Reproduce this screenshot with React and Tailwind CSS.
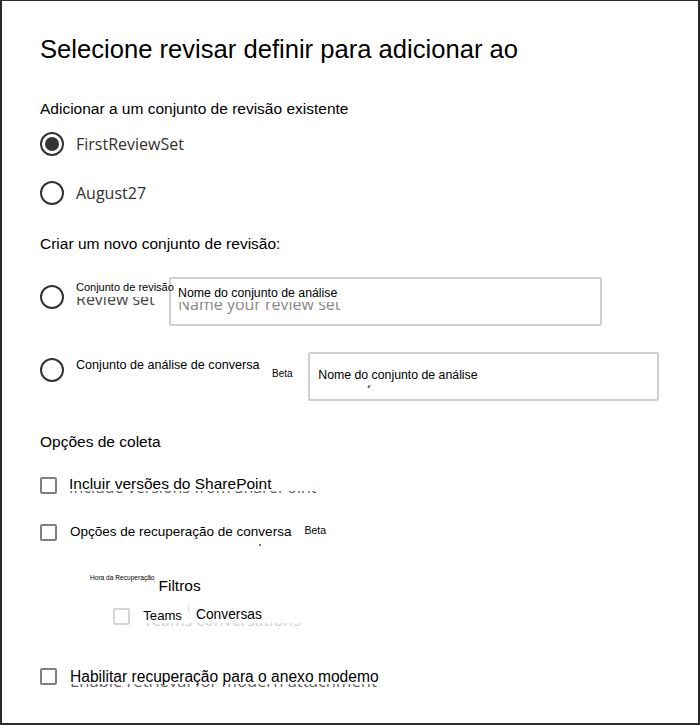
const AR = "font-['Liberation_Sans',Arial,sans-serif]";
const OS = "font-['Open_Sans','Noto_Sans',sans-serif]";

function Radio({ checked }) {
  return (
    <span className="flex h-6 w-6 shrink-0 items-center justify-center rounded-full border-2 border-[#333333] bg-white">
      {checked && <span className="h-[14px] w-[14px] rounded-full bg-[#333333]" />}
    </span>
  );
}

function Box({ light }) {
  return (
    <span
      className={
        light
          ? "block h-[17px] w-[17px] shrink-0 rounded-[2px] border-2 border-[#d4d4d4] bg-white"
          : "block h-[17px] w-[17px] shrink-0 rounded-[2px] border-2 border-[#7f7f7f] bg-white"
      }
    />
  );
}

export default function App() {
  return (
    <div className={`${AR} box-border h-[725px] w-[700px] overflow-hidden border-t border-r-2 border-b-2 border-l-2 border-[#2b2b2b] bg-white pl-[38px] pt-[35.6px] text-black`}>
      {/* Title */}
      <div className="whitespace-nowrap text-[25.6px] leading-none">
        Selecione revisar definir para adicionar ao
      </div>

      {/* Existing */}
      <div className="mt-[39px] whitespace-nowrap text-[15.5px] leading-none">
        Adicionar a um conjunto de revisão existente
      </div>

      <div className="mt-[15.8px] flex h-6 items-center">
        <Radio checked />
        <span className={`${OS} ml-3 text-[16px] leading-none text-[#323130]`}>FirstReviewSet</span>
      </div>

      <div className="mt-[25px] flex h-6 items-center">
        <Radio />
        <span className={`${OS} ml-3 text-[16px] leading-none text-[#323130]`}>August27</span>
      </div>

      {/* New */}
      <div className="mt-[30.7px] whitespace-nowrap text-[15.5px] leading-none">
        Criar um novo conjunto de revisão:
      </div>

      <div className="mt-[25px] flex h-[49px] items-start">
        <div className="mt-[8px]">
          <Radio />
        </div>
        <div className="relative ml-3 mt-[14.8px] w-[80px] shrink-0">
          <span className={`${OS} block whitespace-nowrap text-[16px] leading-none text-[#484644]`}>Review set</span>
          <div className="absolute left-0 right-0 top-[-9.5px] z-10 h-[14.7px] bg-white pt-[0.4px] whitespace-nowrap text-[11px] leading-none">
            Conjunto de revisão
          </div>
        </div>
        <div className="relative ml-[13px] h-[49px] w-[433px] shrink-0 rounded-[2px] border-2 border-[#cfcfcf] pl-[7px] pt-[14px]">
          <div className="relative inline-block">
            <span className={`${OS} block whitespace-nowrap text-[16px] leading-none text-[#8a8886]`}>Name your review set</span>
            <div className="absolute left-0 right-0 top-[-9.8px] h-[16px] bg-white pt-[1.6px] whitespace-nowrap text-[12.3px] leading-none">
              Nome do conjunto de análise
            </div>
          </div>
        </div>
      </div>

      <div className="mt-[26px] flex h-[49.3px] items-start">
        <div className="mt-[6.3px]">
          <Radio />
        </div>
        <span className="ml-3 mt-[7.6px] w-[184px] shrink-0 whitespace-nowrap text-[12.6px] leading-none">
          Conjunto de análise de conversa
        </span>
        <span className="ml-[12px] mt-[17.5px] w-[21px] shrink-0 text-[10px] leading-none">Beta</span>
        <div className="relative ml-[15.3px] h-[49.3px] w-[351px] shrink-0 rounded-[2px] border-2 border-[#cfcfcf] pl-[8px] pt-[14.9px]">
          <span className="block whitespace-nowrap text-[12.3px] leading-none">Nome do conjunto de análise</span>
          <span className="absolute left-[58px] top-[31px] h-[3px] w-[1.5px] rotate-[35deg] bg-[#6b6b6b]" />
        </div>
      </div>

      {/* Collection options */}
      <div className="mt-[32.6px] whitespace-nowrap text-[15.5px] leading-none">Opções de coleta</div>

      <div className="mt-[27.6px] flex h-[17px] items-start">
        <Box />
        <div className="relative ml-[12px] mt-[2.6px]">
          <span className={`${OS} block whitespace-nowrap text-[16px] leading-none text-[#605e5c]`}>Include versions from SharePoint</span>
          <div className="absolute left-0 right-0 top-[-5.3px] h-[17.5px] bg-white pt-[1.9px] whitespace-nowrap text-[15.5px] leading-none">
            Incluir versões do SharePoint
          </div>
        </div>
      </div>

      <div className="relative mt-[30.3px] flex h-[17px] items-start">
        <Box />
        <span className="ml-[13px] mt-[1.3px] w-[222.5px] shrink-0 whitespace-nowrap text-[13.5px] leading-none">
          Opções de recuperação de conversa
        </span>
        <span className="ml-[12px] mt-[1.4px] text-[10.5px] leading-none">Beta</span>
        <span className="absolute left-[219px] top-[20px] h-[2px] w-[1.5px] bg-[#777777]" />
      </div>

      <div className="relative mt-[34px] flex items-start">
        <span className="ml-[50px] whitespace-nowrap text-[6.6px] leading-none">Hora da Recuperação</span>
        <span className="absolute left-[114px] top-[3.5px] h-[5px] w-px bg-[#dddddd]" />
        <span className="ml-[4px] mt-[2.9px] whitespace-nowrap text-[15.5px] leading-none">Filtros</span>
      </div>

      <div className="ml-[73.3px] mt-[14.3px] flex h-[17.3px] items-start">
        <Box light />
        <div className="relative ml-[13px] mt-[4.1px]">
          <span className={`${OS} block whitespace-nowrap text-[16px] leading-none text-[#cfcfcf]`}>Teams conversations</span>
          <div className="absolute left-0 right-0 top-[-6.8px] h-[17.8px] bg-white">
            <span className="absolute left-0 top-[3.9px] whitespace-nowrap text-[13.1px] leading-none">Teams</span>
            <span className="absolute left-[44.5px] top-[0px] h-[7.5px] w-px bg-[#d8d8d8]" />
            <span className="absolute left-[52.7px] top-[3.3px] whitespace-nowrap text-[13.8px] leading-none">Conversas</span>
          </div>
        </div>
      </div>

      <div className="mt-[43.3px] flex h-[17.4px] items-start">
        <Box />
        <div className="relative ml-[13px] mt-[5px]">
          <span className={`${OS} block whitespace-nowrap text-[16.6px] leading-none text-[#605e5c]`}>Enable retrieval for modern attachment</span>
          <div className="absolute left-0 right-0 top-[-6.3px] h-[16.8px] bg-white pt-[1.6px] whitespace-nowrap text-[15.6px] leading-none">
            Habilitar recuperação para o anexo modemo
          </div>
        </div>
      </div>
    </div>
  );
}
